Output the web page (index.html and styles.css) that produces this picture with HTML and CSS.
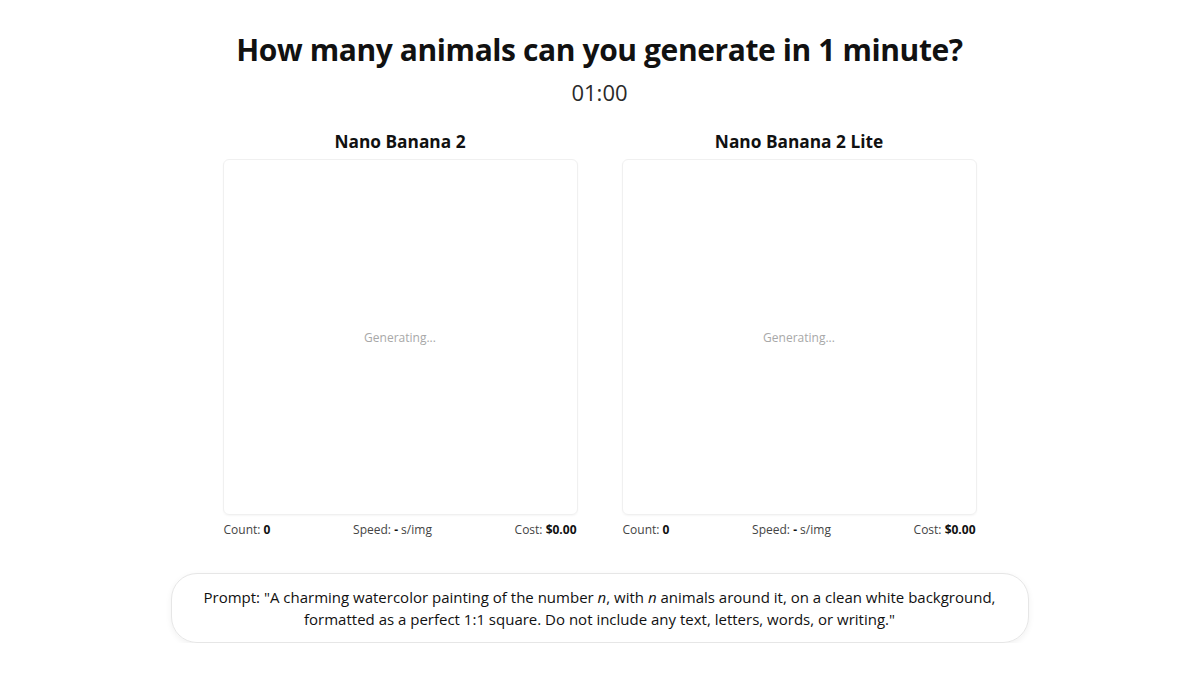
FILE: index.html
```html
<!DOCTYPE html>
<html lang="en">
<head>
<meta charset="utf-8">
<title>Animal Generation Race</title>
<link rel="stylesheet" href="styles.css">
</head>
<body>
<main class="page">
  <h1 class="title">How many animals can you generate in 1 minute?</h1>
  <div class="timer">01:00</div>

  <section class="arena">
    <div class="model">
      <h2 class="model-name">Nano Banana 2</h2>
      <div class="canvas"><span class="status">Generating...</span></div>
      <div class="stats">
        <span class="stat">Count: <b>0</b></span>
        <span class="stat">Speed: <b>-</b> s/img</span>
        <span class="stat">Cost: <b>$0.00</b></span>
      </div>
    </div>
    <div class="model">
      <h2 class="model-name">Nano Banana 2 Lite</h2>
      <div class="canvas"><span class="status">Generating...</span></div>
      <div class="stats">
        <span class="stat">Count: <b>0</b></span>
        <span class="stat">Speed: <b>-</b> s/img</span>
        <span class="stat">Cost: <b>$0.00</b></span>
      </div>
    </div>
  </section>

  <div class="prompt">
    Prompt: "A charming watercolor painting of the number <i>n</i>, with <i>n</i> animals around it, on a clean white background, formatted as a perfect 1:1 square. Do not include any text, letters, words, or writing."
  </div>
</main>
</body>
</html>
```

FILE: styles.css
```css
* {
  box-sizing: border-box;
}

html, body {
  margin: 0;
  padding: 0;
  background: #ffffff;
}

body {
  font-family: "Open Sans", "Liberation Sans", sans-serif;
  color: #111;
}

.page {
  display: flex;
  flex-direction: column;
  align-items: center;
  padding-top: 30px;
}

.title {
  margin: 0;
  font-size: 30px;
  font-weight: 700;
  letter-spacing: -0.4px;
  line-height: 40px;
  color: #111;
}

.timer {
  margin-top: 8px;
  font-size: 22px;
  line-height: 28px;
  color: #2a2a2a;
}

.arena {
  display: flex;
  gap: 44px;
  margin-top: 24px;
}

.model {
  width: 355px;
  display: flex;
  flex-direction: column;
  align-items: center;
}

.model-name {
  margin: 0;
  font-size: 17.3px;
  font-weight: 700;
  line-height: 24px;
  color: #111;
}

.canvas {
  margin-top: 5px;
  width: 355px;
  height: 356px;
  border: 1px solid #f0f0f0;
  border-radius: 6px;
  box-shadow: 0 1px 2px rgba(0, 0, 0, 0.04);
  display: flex;
  align-items: center;
  justify-content: center;
}

.status {
  font-size: 12px;
  color: #a8a8a8;
}

.stats {
  width: 100%;
  display: flex;
  justify-content: space-between;
  margin-top: 7px;
  padding: 0 1px;
  font-size: 12px;
  line-height: 16px;
  color: #444;
}

.stats b {
  color: #111;
  font-weight: 700;
}

.prompt {
  margin-top: 35px;
  width: 858px;
  padding: 12px 30px;
  border: 1px solid #e6e6e6;
  border-radius: 26px;
  box-shadow: 0 2px 6px rgba(0, 0, 0, 0.06);
  text-align: center;
  font-size: 15px;
  line-height: 22px;
  color: #111;
}

.prompt i {
  font-style: italic;
}
```
